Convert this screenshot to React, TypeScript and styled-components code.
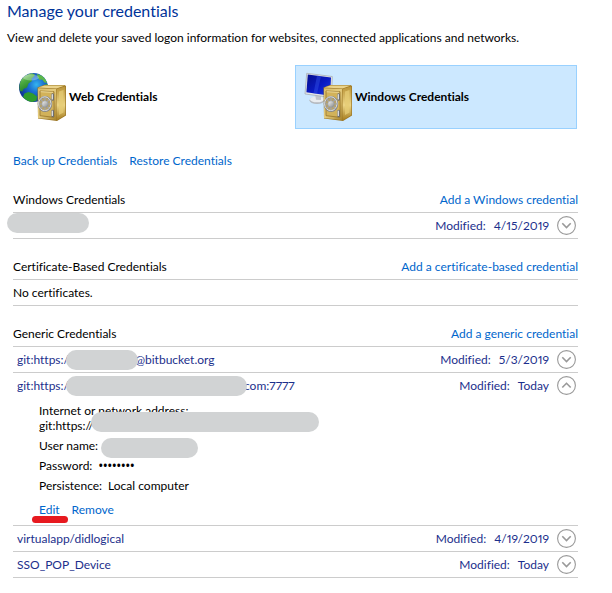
import React, { useState } from 'react';
import styled, { createGlobalStyle } from 'styled-components';

const GlobalStyle = createGlobalStyle`
  *, *::before, *::after { box-sizing: border-box; }
  body {
    margin: 0;
    background: #ffffff;
    color: #000000;
    font-family: Lato, 'Segoe UI', sans-serif;
    font-size: 12px;
    font-variant-ligatures: none;
    font-variant-numeric: proportional-nums;
    line-height: 16px;
  }
`;

const Page = styled.main`
  padding: 0 34px 15px 7px;
`;

const Title = styled.h1`
  margin: 0;
  color: #003399;
  font-size: 16px;
  font-weight: 400;
  line-height: 22px;
`;

const Intro = styled.p`
  margin: 8px 0 19px;
  white-space: nowrap;
`;

const Vaults = styled.div`
  display: grid;
  grid-template-columns: 1fr 1fr;
  gap: 4px;
  padding: 0 1px 0 2px;
`;

const Vault = styled.button<{ $selected?: boolean }>`
  display: flex;
  align-items: center;
  gap: 3px;
  height: 64px;
  padding: 0 8px;
  border: 1px solid ${(p) => (p.$selected ? '#99d1ff' : 'transparent')};
  background: ${(p) => (p.$selected ? '#cce8ff' : 'transparent')};
  color: #000000;
  font: inherit;
  font-weight: 700;
  text-align: left;
`;

const VaultPicture = styled.svg`
  flex: none;
  width: 48px;
  height: 48px;
  overflow: visible;
`;

const Content = styled.div`
  padding-left: 6px;
`;

const Link = styled.a`
  color: #0066cc;
  text-decoration: none;
  white-space: nowrap;
`;

const Actions = styled.nav`
  display: flex;
  gap: 12px;
  padding: 24px 0 18px;
`;

const Group = styled.section`
  margin-bottom: 15px;
`;

const GroupHeader = styled.header`
  display: flex;
  align-items: center;
  justify-content: space-between;
  height: 26px;
  border-bottom: 1px solid #cccccc;
`;

const GroupTitle = styled.h2`
  margin: 0;
  font-size: 12px;
  font-weight: 400;
`;

const Row = styled.div<{ $open?: boolean }>`
  display: flex;
  align-items: center;
  height: 26px;
  padding: 0 2px 0 4px;
  border-bottom: 1px solid ${(p) => (p.$open ? 'transparent' : '#cccccc')};
  color: #1c2f8c;
`;

const EmptyRow = styled.p`
  display: flex;
  align-items: center;
  height: 26px;
  margin: 0;
  border-bottom: 1px solid #cccccc;
`;

const Name = styled.span`
  display: flex;
  flex: 1;
  align-items: center;
`;

const Modified = styled.span`
  display: flex;
  gap: 8px;
  margin-right: 8px;
`;

const Toggle = styled.button`
  display: flex;
  padding: 0;
  border: 0;
  background: transparent;
`;

const Mask = styled.span<{ $width: number }>`
  position: relative;
  flex: none;
  width: ${(p) => p.$width}px;
  height: 20px;
  margin: 0 -3px;
  border-radius: 10px;
  background: #d1d3d4;
`;

const LooseMask = styled(Mask)`
  margin: -6px 0 0 -10px;
`;

const Details = styled.div`
  padding: 4px 0 7px 26px;
  border-bottom: 1px solid #cccccc;
`;

const Fields = styled.dl`
  margin: 0;
`;

const Field = styled.div<{ $stacked?: boolean }>`
  display: flex;
  flex-direction: ${(p) => (p.$stacked ? 'column' : 'row')};
  gap: ${(p) => (p.$stacked ? '0' : '6px')};
  margin-bottom: 5px;
  line-height: 15px;
`;

const Value = styled.dd`
  display: flex;
  align-items: center;
  height: 15px;
  margin: 0;
`;

const Secret = styled(Value)`
  font-family: 'Open Sans', sans-serif;
  font-weight: 600;
`;

const AddressMask = styled(Mask)`
  top: -4px;
`;

const UserMask = styled(Mask)`
  top: 2px;
`;

const DetailActions = styled.div`
  display: flex;
  gap: 12px;
  padding-top: 4px;
`;

const Marked = styled.span`
  position: relative;

  &::after {
    content: '';
    position: absolute;
    right: -8px;
    bottom: -5px;
    left: -7px;
    height: 7px;
    border-radius: 4px;
    background: #e7191f;
  }
`;

function Safe({ id }: { id: string }) {
  return (
    <g>
      <defs>
        <linearGradient id={`${id}-front`} x1="0" y1="0" x2="1" y2="1">
          <stop offset="0" stopColor="#d9bd68" />
          <stop offset="0.5" stopColor="#e3ca7d" />
          <stop offset="1" stopColor="#a8842d" />
        </linearGradient>
        <linearGradient id={`${id}-side`} x1="0" y1="0" x2="0" y2="1">
          <stop offset="0" stopColor="#b99337" />
          <stop offset="0.55" stopColor="#ecd586" />
          <stop offset="1" stopColor="#a57b1c" />
        </linearGradient>
        <linearGradient id={`${id}-metal`} x1="0" y1="0" x2="1" y2="1">
          <stop offset="0" stopColor="#f6f6f6" />
          <stop offset="1" stopColor="#85888b" />
        </linearGradient>
      </defs>
      <path d="M19.5 14.5 26 12h20.500l1.500 1v29.500L39 48l-19-2.500z" fill="#9b7625" />
      <path d="M20 14.500 26.500 12.500H47L38.500 15.500z" fill="#ead38b" />
      <path d="M38.500 16 47.300 13.300v28.700L38.500 47.500z" fill={`url(#${id}-side)`} />
      <path d="M41 18.500 45.500 17v22.500L41 42z" fill="#e6cc76" opacity="0.75" />
      <path d="M20 15.300 38 16v31L20 45z" fill={`url(#${id}-front)`} />
      <path d="M22 18 36 18.700v25.600L22 42.700z" fill="#d2b25a" stroke="#98752a" strokeWidth="0.8" />
      <path d="M22.600 18.700 35 19.300" stroke="#f6e7ad" strokeWidth="0.8" />
      <path d="M34.700 21.500v5M34.700 38v5" stroke="#6d6e70" strokeWidth="2.600" strokeLinecap="round" />
      <path d="M34.300 21.500v4.500M34.300 38v4.500" stroke="#e6e6e6" strokeWidth="1.200" strokeLinecap="round" />
      <ellipse cx="27" cy="31" rx="6.400" ry="7.200" fill="#b5a16b" stroke="#85878a" strokeWidth="1.700" />
      <ellipse cx="26.800" cy="30.700" rx="6.200" ry="6.900" fill="none" stroke="#e3e5e7" strokeWidth="1" />
      <path
        d="M27 24.500v13M21 31h12M22.700 26.300l8.600 9.400M31.300 26.300l-8.600 9.400"
        stroke="#a2a5a9"
        strokeWidth="1.200"
      />
      <circle cx="27" cy="31" r="3.200" fill={`url(#${id}-metal)`} stroke="#8d9093" strokeWidth="0.500" />
    </g>
  );
}

function GlobeSafe() {
  return (
    <VaultPicture viewBox="0 0 48 48" aria-hidden="true">
      <defs>
        <radialGradient id="sea" cx="0.6" cy="0.4" r="0.6">
          <stop offset="0" stopColor="#35b4ef" />
          <stop offset="0.45" stopColor="#1a6fd0" />
          <stop offset="1" stopColor="#0f3796" />
        </radialGradient>
        <linearGradient id="land" x1="0" y1="0" x2="0.5" y2="1">
          <stop offset="0" stopColor="#cdeab4" />
          <stop offset="0.45" stopColor="#4fae42" />
          <stop offset="1" stopColor="#1d7a25" />
        </linearGradient>
      </defs>
      <circle cx="15.500" cy="14.500" r="14.500" fill="url(#sea)" />
      <path
        d="M3.500 6.500C6 3 10 .800 14 .300l3 1.200-1.500 2.500-2 1.500.500 2.500-3.500 2.500-1.500 4-3.500 1.500-1 2.500L2 18C.900 14 1.500 9.500 3.500 6.500z"
        fill="url(#land)"
      />
      <path d="M6.500 20.500l4-1.500 4.500 1.500 4 3-.500 4-4 1.500c-4-.300-7-2-9.500-5z" fill="#2f9c2d" />
      <path d="M19 1l5 1.700 3.500 3.800 1.500 3.500-2.500-.500-2.500-3-2.500.500-2-3z" fill="#5cb848" />
      <path d="M26.500 11.500l3-.500.400 3.500-2.400 1z" fill="#43a83b" />
      <ellipse cx="13" cy="4.500" rx="8" ry="3" fill="#ffffff" opacity="0.3" />
      <Safe id="web" />
    </VaultPicture>
  );
}

function MonitorSafe() {
  return (
    <VaultPicture viewBox="0 0 48 48" aria-hidden="true">
      <defs>
        <linearGradient id="screen" x1="0" y1="0" x2="1" y2="1">
          <stop offset="0" stopColor="#050f8c" />
          <stop offset="0.55" stopColor="#0a1ac4" />
          <stop offset="1" stopColor="#1e3fe0" />
        </linearGradient>
      </defs>
      <ellipse cx="13" cy="27.300" rx="7.500" ry="3.700" fill="#b4b9bf" />
      <ellipse cx="13" cy="26.300" rx="7" ry="3" fill="#e9ecef" />
      <path d="M11 20.500l6 1v5.500l-5-.300z" fill="#c2c7cc" />
      <path d="M2.700 .300 28.300 3.500 27.500 24.500 1 21z" fill="#e4e6e8" stroke="#a2a8ae" strokeWidth="0.700" />
      <path d="M3.800 1.500 27 4.500 26.200 22.700 2.400 19.300z" fill="url(#screen)" />
      <path d="M13 2.700 17 3.200 13 20.800 9.500 20.300z" fill="#3252e6" opacity="0.45" />
      <Safe id="win" />
    </VaultPicture>
  );
}

function Chevron({ up }: { up?: boolean }) {
  return (
    <svg width="19" height="19" viewBox="0 0 19 19" fill="none" aria-hidden="true">
      <circle cx="9.500" cy="9.500" r="8.900" stroke="#999999" strokeWidth="1.100" />
      <path d={up ? 'M5.300 11.500l4.200-4.200 4.200 4.200' : 'M5.300 7.300l4.200 4.200 4.200-4.200'} stroke="#999999" strokeWidth="1.600" />
    </svg>
  );
}

interface CredentialProps {
  label: string;
  name: React.ReactNode;
  modified: string;
  initiallyOpen?: boolean;
  children?: React.ReactNode;
}

function Credential({ label, name, modified, initiallyOpen = false, children }: CredentialProps) {
  const [open, setOpen] = useState(initiallyOpen);
  const expanded = open && Boolean(children);
  return (
    <>
      <Row $open={expanded}>
        <Name>{name}</Name>
        <Modified>
          <span>Modified:</span>
          <span>{modified}</span>
        </Modified>
        <Toggle type="button" aria-label={label} aria-expanded={open} onClick={() => setOpen(!open)}>
          <Chevron up={open} />
        </Toggle>
      </Row>
      {expanded && <Details>{children}</Details>}
    </>
  );
}

export default function App() {
  return (
    <>
      <GlobalStyle />
      <Page>
        <Title>Manage your credentials</Title>
        <Intro>View and delete your saved logon information for websites, connected applications and networks.</Intro>

        <Vaults>
          <Vault type="button">
            <GlobeSafe />
            Web Credentials
          </Vault>
          <Vault type="button" $selected aria-pressed="true">
            <MonitorSafe />
            Windows Credentials
          </Vault>
        </Vaults>

        <Content>
          <Actions>
            <Link href="#backup">Back up Credentials</Link>
            <Link href="#restore">Restore Credentials</Link>
          </Actions>

          <Group>
            <GroupHeader>
              <GroupTitle>Windows Credentials</GroupTitle>
              <Link href="#add-windows">Add a Windows credential</Link>
            </GroupHeader>
            <Credential label="Windows credential" name={<LooseMask $width={82} />} modified="4/15/2019" />
          </Group>

          <Group>
            <GroupHeader>
              <GroupTitle>Certificate-Based Credentials</GroupTitle>
              <Link href="#add-certificate">Add a certificate-based credential</Link>
            </GroupHeader>
            <EmptyRow>No certificates.</EmptyRow>
          </Group>

          <Group>
            <GroupHeader>
              <GroupTitle>Generic Credentials</GroupTitle>
              <Link href="#add-generic">Add a generic credential</Link>
            </GroupHeader>
            <Credential
              label="Bitbucket credential"
              name={<>git:https:/<Mask $width={72} />@bitbucket.org</>}
              modified="5/3/2019"
            />
            <Credential
              label="Port 7777 credential"
              name={<>git:https:/<Mask $width={181} />com:7777</>}
              modified="Today"
              initiallyOpen
            >
              <Fields>
                <Field $stacked>
                  <dt>Internet or network address:</dt>
                  <Value>git:https://<AddressMask $width={228} /></Value>
                </Field>
                <Field>
                  <dt>User name:</dt>
                  <Value><UserMask $width={97} /></Value>
                </Field>
                <Field>
                  <dt>Password:</dt>
                  <Secret>••••••••</Secret>
                </Field>
                <Field>
                  <dt>Persistence:</dt>
                  <Value>Local computer</Value>
                </Field>
              </Fields>
              <DetailActions>
                <Marked><Link href="#edit">Edit</Link></Marked>
                <Link href="#remove">Remove</Link>
              </DetailActions>
            </Credential>
            <Credential label="virtualapp/didlogical" name="virtualapp/didlogical" modified="4/19/2019" />
            <Credential label="SSO_POP_Device" name="SSO_POP_Device" modified="Today" />
          </Group>
        </Content>
      </Page>
    </>
  );
}
